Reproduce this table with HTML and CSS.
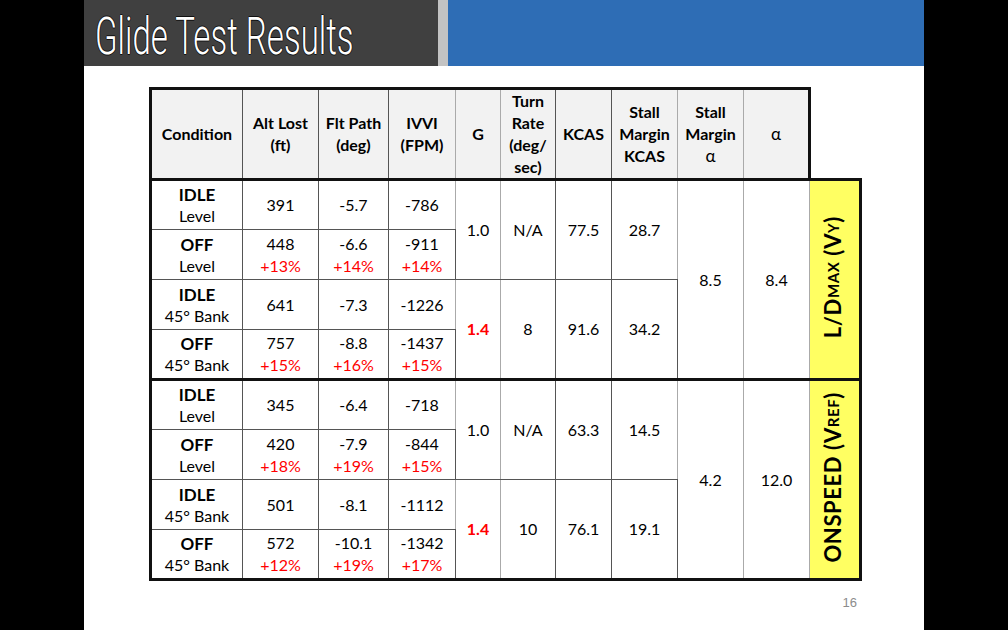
FILE: index.html
```html
<!DOCTYPE html>
<html lang="en">
<head>
<meta charset="utf-8">
<title>Glide Test Results</title>
<link rel="stylesheet" href="styles.css">
</head>
<body>
<div class="slide">
  <header class="titlebar">
    <div class="title-panel"><h1 class="title">Glide Test Results</h1></div>
    <div class="title-gap"></div>
    <div class="title-blue"></div>
  </header>
  <main class="content">
    <table class="results">
      <colgroup>
        <col class="c-cond"><col class="c-alt"><col class="c-flt"><col class="c-ivvi"><col class="c-g"><col class="c-turn"><col class="c-kcas"><col class="c-smk"><col class="c-sma"><col class="c-alpha"><col class="c-label">
      </colgroup>
      <thead>
        <tr>
          <th class="first">Condition</th>
          <th>Alt Lost<br>(ft)</th>
          <th>Flt Path<br>(deg)</th>
          <th class="gr">IVVI<br>(FPM)</th>
          <th class="gr">G</th>
          <th>Turn<br>Rate<br>(deg/<br>sec)</th>
          <th>KCAS</th>
          <th class="gr">Stall<br>Margin<br>KCAS</th>
          <th class="gr">Stall<br>Margin<br><span class="greek">α</span></th>
          <th class="last"><span class="greek">α</span></th>
          <th class="blank"></th>
        </tr>
      </thead>
      <tbody>
        <tr>
          <td class="cond"><b>IDLE</b><br>Level</td>
          <td>391</td><td>-5.7</td><td class="gr">-786</td>
          <td rowspan="2" class="gr">1.0</td><td rowspan="2">N/A</td><td rowspan="2">77.5</td><td rowspan="2" class="gr">28.7</td>
          <td rowspan="4" class="gr">8.5</td><td rowspan="4" class="gr">8.4</td>
          <td rowspan="4" class="label"><span class="vlabel">L/D<span class="sub">MAX</span> (V<span class="sub">Y</span>)</span></td>
        </tr>
        <tr>
          <td class="cond"><b>OFF</b><br>Level</td>
          <td>448<br><span class="pct">+13%</span></td><td>-6.6<br><span class="pct">+14%</span></td><td class="gr">-911<br><span class="pct">+14%</span></td>
        </tr>
        <tr>
          <td class="cond"><b>IDLE</b><br>45° Bank</td>
          <td>641</td><td>-7.3</td><td class="gr">-1226</td>
          <td rowspan="2" class="gr red">1.4</td><td rowspan="2">8</td><td rowspan="2">91.6</td><td rowspan="2" class="gr">34.2</td>
        </tr>
        <tr>
          <td class="cond"><b>OFF</b><br>45° Bank</td>
          <td>757<br><span class="pct">+15%</span></td><td>-8.8<br><span class="pct">+16%</span></td><td class="gr">-1437<br><span class="pct">+15%</span></td>
        </tr>
      </tbody>
      <tbody>
        <tr>
          <td class="cond"><b>IDLE</b><br>Level</td>
          <td>345</td><td>-6.4</td><td class="gr">-718</td>
          <td rowspan="2" class="gr">1.0</td><td rowspan="2">N/A</td><td rowspan="2">63.3</td><td rowspan="2" class="gr">14.5</td>
          <td rowspan="4" class="gr">4.2</td><td rowspan="4" class="gr">12.0</td>
          <td rowspan="4" class="label"><span class="vlabel">ONSPEED (V<span class="sub">REF</span>)</span></td>
        </tr>
        <tr>
          <td class="cond"><b>OFF</b><br>Level</td>
          <td>420<br><span class="pct">+18%</span></td><td>-7.9<br><span class="pct">+19%</span></td><td class="gr">-844<br><span class="pct">+15%</span></td>
        </tr>
        <tr>
          <td class="cond"><b>IDLE</b><br>45° Bank</td>
          <td>501</td><td>-8.1</td><td class="gr">-1112</td>
          <td rowspan="2" class="gr red">1.4</td><td rowspan="2">10</td><td rowspan="2">76.1</td><td rowspan="2" class="gr">19.1</td>
        </tr>
        <tr>
          <td class="cond"><b>OFF</b><br>45° Bank</td>
          <td>572<br><span class="pct">+12%</span></td><td>-10.1<br><span class="pct">+19%</span></td><td class="gr">-1342<br><span class="pct">+17%</span></td>
        </tr>
      </tbody>
    </table>
  </main>
  <footer class="page-num">16</footer>
</div>
</body>
</html>
```

FILE: styles.css
```css
html, body {
  margin: 0;
  padding: 0;
}
body {
  background: #000;
  font-family: Lato, "Liberation Sans", sans-serif;
  color: #000;
}
.slide {
  width: 840px;
  height: 630px;
  margin: 0 auto;
  background: #fff;
  display: flex;
  flex-direction: column;
}
.titlebar {
  height: 66px;
  flex: none;
  display: flex;
}
.title-panel {
  width: 354px;
  flex: none;
  background: #404040;
  box-sizing: border-box;
  padding: 11px 0 0 11px;
  overflow: hidden;
}
.title {
  margin: 0;
  font-family: Roboto, "Liberation Sans", sans-serif;
  font-weight: 300;
  font-size: 52px;
  line-height: 52px;
  color: #fff;
  white-space: nowrap;
  display: inline-block;
  transform: scaleX(0.635);
  transform-origin: left center;
  text-shadow: 1px 0 0 #111, -1px 0 0 #111, 0 1px 0 #111, 0 -1px 0 #111;
}
.title-gap {
  width: 10px;
  flex: none;
  background: #c3c3c3;
}
.title-blue {
  flex: 1;
  background: #2e6db5;
}
.content {
  flex: none;
  padding: 21px 0 0 65px;
}
.results {
  border-collapse: collapse;
  table-layout: fixed;
  width: 710px;
}
.c-cond { width: 92px; }
.c-alt { width: 76px; }
.c-flt { width: 70px; }
.c-ivvi { width: 67px; }
.c-g { width: 45px; }
.c-turn { width: 55px; }
.c-kcas { width: 56px; }
.c-smk { width: 66px; }
.c-sma { width: 66px; }
.c-alpha { width: 66px; }
.c-label { width: 51px; }

.results th,
.results td {
  border: 1px solid #555;
  padding: 0;
  text-align: center;
  vertical-align: middle;
  font-size: 16px;
  line-height: 22px;
}
.results th {
  height: 86px;
  font-weight: 700;
  background: #f2f2f2;
  border-top: 3px solid #111;
  border-bottom: 3px solid #111;
}
.results th.first { border-left: 3px solid #111; }
.results th.last { border-right: 3px solid #111; }
.results th.blank {
  background: #fff;
  border: none;
}
.greek {
  font-weight: 400;
  font-size: 17px;
}
.results tbody {
  border: 3px solid #111;
}
.results tbody tr {
  height: 50px;
}
.results td.cond {
  line-height: 21px;
}
.results td.cond b {
  font-size: 17px;
}
.results .gr {
  border-right-color: #aaa;
}
.pct {
  color: #f00;
}
.red {
  color: #f00;
  font-weight: 700;
}
.results td.label {
  background: #ffff62;
  border-left: 1px solid #999;
  border-right: 3px solid #111;
}
.vlabel {
  display: inline-block;
  writing-mode: vertical-rl;
  transform: rotate(180deg);
  font-weight: 700;
  font-size: 22px;
  line-height: 24px;
  letter-spacing: 0.6px;
  white-space: nowrap;
  margin-left: -3px;
}
.sub {
  font-size: 15px;
}
.page-num {
  margin-top: auto;
  text-align: right;
  padding: 0 67px 19px 0;
  font-family: "Liberation Sans", sans-serif;
  font-size: 13px;
  line-height: 16px;
  color: #8c8c8c;
}
```
